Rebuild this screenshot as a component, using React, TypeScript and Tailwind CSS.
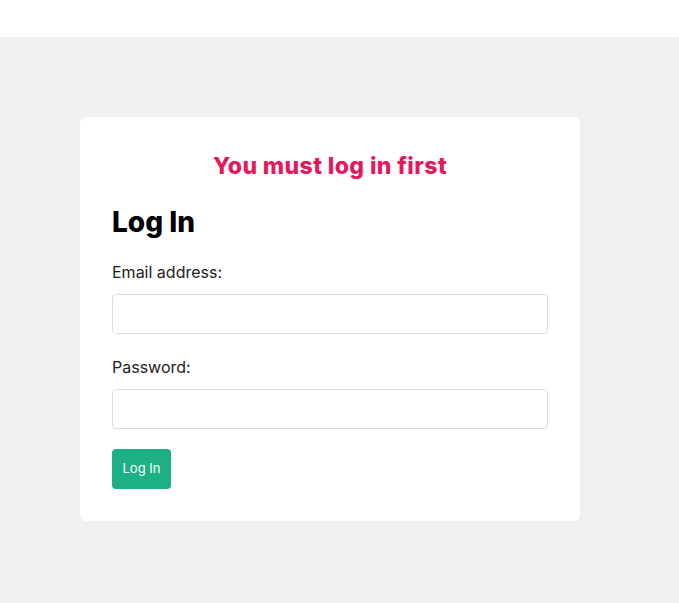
export default function App() {
  return (
    <div className="min-h-screen bg-[#f0f0f0] font-['Inter',sans-serif]">
      <header className="h-[37px] bg-white" />
      <main className="px-20 pt-20 pb-20">
        <div className="w-[500px] rounded-md bg-white p-8">
          <h3 className="text-center text-[23px] font-extrabold leading-[34px] tracking-[0.4px] text-[#e8175d]">
            You must log in first
          </h3>
          <h2 className="mt-[21px] text-[28px] font-extrabold leading-[36px] text-black">Log In</h2>
          <form className="mt-5 flex flex-col" onSubmit={(e) => e.preventDefault()}>
            <label className="text-base leading-6 text-[#222]">Email address:</label>
            <input
              type="email"
              className="mt-[10px] h-10 rounded border border-[#ddd] px-3 outline-none"
            />
            <label className="mt-[21px] text-base leading-6 text-[#222]">Password:</label>
            <input
              type="password"
              className="mt-[10px] h-10 rounded border border-[#ddd] px-3 outline-none"
            />
            <button
              type="submit"
              className="mt-5 h-10 w-[59px] rounded bg-[#1eb085] text-[13px] text-white"
            >
              Log In
            </button>
          </form>
        </div>
      </main>
    </div>
  );
}
